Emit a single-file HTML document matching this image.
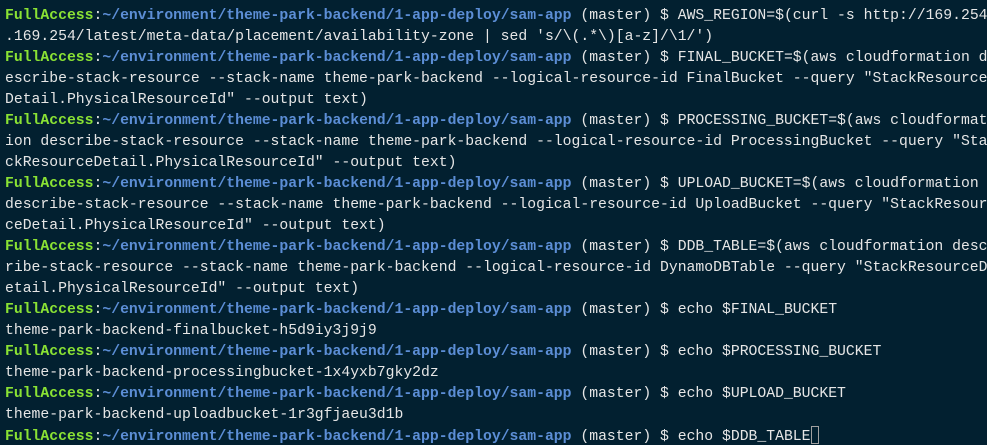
<!DOCTYPE html>
<html><head><meta charset="utf-8"><style>
html,body{margin:0;padding:0;background:#022030;width:987px;height:445px;overflow:hidden}
pre{margin:0;padding:6px 0 0 5px;font-family:"Liberation Mono",monospace;font-size:14.75px;line-height:21px;color:#e6e6e6;white-space:pre}
.g{color:#8ae234;font-weight:bold}.b{color:#5c8ed6;font-weight:bold}
.c{display:inline-block;width:8px;height:18px;border:1px solid #a0a0a0;vertical-align:-4px;box-sizing:border-box}
</style></head><body><pre><span class="g">FullAccess</span>:<span class="b">~/environment/theme-park-backend/1-app-deploy/sam-app</span> (master) $ AWS_REGION=$(curl -s http://169.254
.169.254/latest/meta-data/placement/availability-zone | sed 's/\(.*\)[a-z]/\1/')
<span class="g">FullAccess</span>:<span class="b">~/environment/theme-park-backend/1-app-deploy/sam-app</span> (master) $ FINAL_BUCKET=$(aws cloudformation d
escribe-stack-resource --stack-name theme-park-backend --logical-resource-id FinalBucket --query "StackResource
Detail.PhysicalResourceId" --output text)
<span class="g">FullAccess</span>:<span class="b">~/environment/theme-park-backend/1-app-deploy/sam-app</span> (master) $ PROCESSING_BUCKET=$(aws cloudformat
ion describe-stack-resource --stack-name theme-park-backend --logical-resource-id ProcessingBucket --query "Sta
ckResourceDetail.PhysicalResourceId" --output text)
<span class="g">FullAccess</span>:<span class="b">~/environment/theme-park-backend/1-app-deploy/sam-app</span> (master) $ UPLOAD_BUCKET=$(aws cloudformation 
describe-stack-resource --stack-name theme-park-backend --logical-resource-id UploadBucket --query "StackResour
ceDetail.PhysicalResourceId" --output text)
<span class="g">FullAccess</span>:<span class="b">~/environment/theme-park-backend/1-app-deploy/sam-app</span> (master) $ DDB_TABLE=$(aws cloudformation desc
ribe-stack-resource --stack-name theme-park-backend --logical-resource-id DynamoDBTable --query "StackResourceD
etail.PhysicalResourceId" --output text)
<span class="g">FullAccess</span>:<span class="b">~/environment/theme-park-backend/1-app-deploy/sam-app</span> (master) $ echo $FINAL_BUCKET
theme-park-backend-finalbucket-h5d9iy3j9j9
<span class="g">FullAccess</span>:<span class="b">~/environment/theme-park-backend/1-app-deploy/sam-app</span> (master) $ echo $PROCESSING_BUCKET
theme-park-backend-processingbucket-1x4yxb7gky2dz
<span class="g">FullAccess</span>:<span class="b">~/environment/theme-park-backend/1-app-deploy/sam-app</span> (master) $ echo $UPLOAD_BUCKET
theme-park-backend-uploadbucket-1r3gfjaeu3d1b
<span class="g">FullAccess</span>:<span class="b">~/environment/theme-park-backend/1-app-deploy/sam-app</span> (master) $ echo $DDB_TABLE<span class="c"></span></pre></body></html>
